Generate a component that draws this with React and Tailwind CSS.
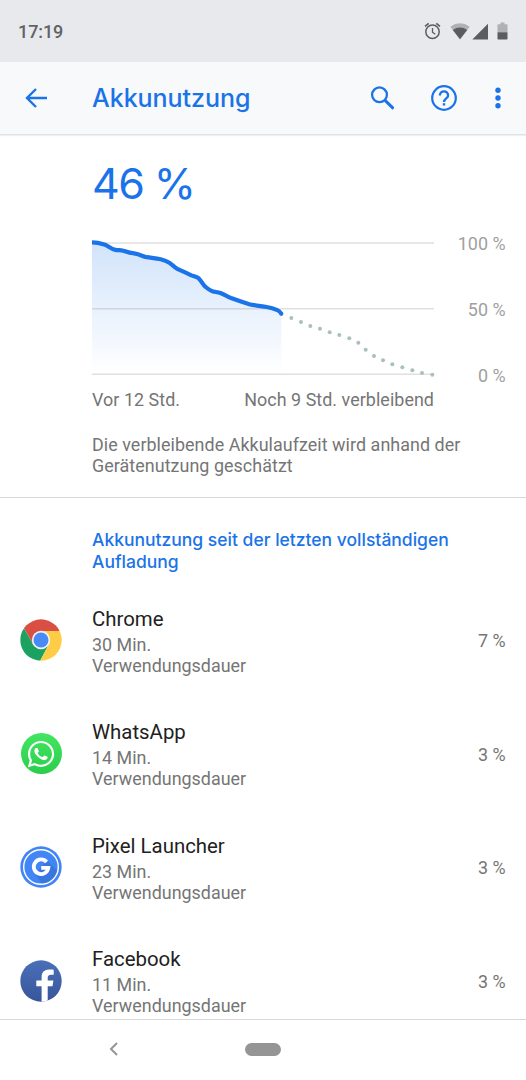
import React from "react";
import { FaWhatsapp } from "react-icons/fa";

const HISTORY =
  "M36 37 C50 37 62 40 73 43.500 C86 48 92 57 106 59.500 C114 61 121 60 130 62 C142 66 152 69 166 71 C178 73 188 79 200 81.500 C216 84 228 85 242 88 C252 90.500 260 93 268 98 C277 104 282 111 292 116.500 C305 123 320 129 334 136 C342 139 350 141 356 145 C365 153 368 164 377 171 C384 177 390 181 397 183.500 C406 186 413 186 421 189 C432 193 441 199 453 204 C472 211 490 217 508 222.500 C525 227 542 228 560 231 C572 233 582 236 592 240.500 C598 243 602 247 604 252";

const FORECAST = [
  [634, 264], [663, 276], [691, 288], [720, 296], [749, 307], [778, 315],
  [808, 325], [835, 338], [857, 359], [882, 378], [909, 391], [937, 403],
  [967, 412], [997, 421], [1026, 429], [1057, 434],
];

function ChromeIcon() {
  return (
    <svg viewBox="0 0 42 42" className="size-[42px]">
      <defs>
        <clipPath id="chromeDisc">
          <circle cx="21" cy="21" r="20.700" />
        </clipPath>
      </defs>
      <g clipPath="url(#chromeDisc)">
        <path d="M0 0H42V12.100H21L13.200 25.600 4.300 10.100Z" fill="#da4f43" />
        <path d="M4.300 10.100 13.200 25.600 28.800 25.600 20 42H0V10.100Z" fill="#1ba160" />
        <path d="M21 12.100H42V42H20L28.800 25.600Z" fill="#ffcd45" />
      </g>
      <circle cx="21" cy="21" r="9.200" fill="#f2f2f2" />
      <circle cx="21" cy="21" r="7.500" fill="#4a8af4" />
    </svg>
  );
}

function WhatsAppIcon() {
  return (
    <span className="ml-[0.5px] flex size-[41px] items-center justify-center rounded-full bg-linear-to-b from-[#42e661] to-[#2ace4b]">
      <FaWhatsapp className="size-[30px] text-white" />
    </span>
  );
}

function LauncherIcon() {
  return (
    <svg viewBox="0 0 42 42" className="size-[42px]">
      <defs>
        <clipPath id="launcherDisc">
          <circle cx="21" cy="21" r="16.400" />
        </clipPath>
      </defs>
      <circle cx="21" cy="21" r="20.700" fill="#4285f4" />
      <circle cx="21" cy="21" r="17.300" fill="#4285f4" stroke="#fff" strokeWidth="1.400" />
      <path clipPath="url(#launcherDisc)" d="M27 14.500 42 29V42H25L15 28Z" fill="#3a76e0" />
      <path d="M26.600 16A7.300 7.300 0 1 0 28.300 21.800H21.200" fill="none" stroke="#fff" strokeWidth="3.800" />
    </svg>
  );
}

function FacebookIcon() {
  return (
    <svg viewBox="0 0 42 42" className="size-[42px]">
      <defs>
        <linearGradient id="facebookFill" x1="0" y1="0" x2="0" y2="1">
          <stop offset="0" stopColor="#4a70b8" />
          <stop offset="1" stopColor="#37559a" />
        </linearGradient>
        <clipPath id="facebookDisc">
          <circle cx="21" cy="21" r="20.700" />
        </clipPath>
      </defs>
      <circle cx="21" cy="21" r="20.700" fill="url(#facebookFill)" />
      <path
        clipPath="url(#facebookDisc)"
        d="M21.600 42V26.200H16.300V20.400H21.600V17.200C21.600 12.300 24.400 9.500 29.200 9.500 31 9.500 33.700 9.700 33.700 9.700V14.800H31C28.500 14.800 27.700 16.100 27.700 18V20.400H33.400L32.500 26.200H27.700V42Z"
        fill="#fff"
      />
    </svg>
  );
}

const APPS = [
  { name: "Chrome", minutes: "30 Min.", share: "7 %", Icon: ChromeIcon },
  { name: "WhatsApp", minutes: "14 Min.", share: "3 %", Icon: WhatsAppIcon },
  { name: "Pixel Launcher", minutes: "23 Min.", share: "3 %", Icon: LauncherIcon },
  { name: "Facebook", minutes: "11 Min.", share: "3 %", Icon: FacebookIcon },
];

function StatusBar() {
  return (
    <div className="flex h-[62px] shrink-0 items-center justify-between bg-[#e8e9ed] pr-[18px] pl-[18px]">
      <span className="text-[18px] font-medium tracking-[-0.1px] text-[#626365]">17:19</span>
      <div className="flex items-center text-[#5b5c5e]">
        <svg viewBox="0 0 17 18" className="h-[18px] w-[17px]" fill="none" stroke="currentColor">
          <circle cx="8.500" cy="9.800" r="6.700" strokeWidth="1.500" />
          <path d="M8.500 6V10.200L11.300 12.200" strokeWidth="1.300" />
          <path d="M1 4.400 4.700 1.300M16 4.400 12.300 1.300" strokeWidth="1.600" />
        </svg>
        <svg viewBox="0 0 20 17" className="ml-[9px] h-[17px] w-5" fill="currentColor">
          <path d="M0.300 3.700Q10 -3 19.700 3.700L10 16.300Z" opacity="0.400" />
          <path d="M2.800 6.900Q10 2 17.200 6.900L10 16.300Z" />
        </svg>
        <svg viewBox="0 0 17 17" className="ml-[2px] h-[17px] w-[17px]" fill="currentColor">
          <path d="M16 0.800V16.500H0.300Z" />
        </svg>
        <svg viewBox="0 0 11 18" className="ml-[8px] h-[18px] w-[11px]" fill="currentColor">
          <path d="M1.300 2.300H3.500V0.500H7.500V2.300H9.700Q10.500 2.300 10.500 3.100V10.300H0.500V3.100Q0.500 2.300 1.300 2.300Z" opacity="0.400" />
          <path d="M0.500 10.300H10.500V16.700Q10.500 17.500 9.700 17.500H1.300Q0.500 17.500 0.500 16.700Z" />
        </svg>
      </div>
    </div>
  );
}

function AppBar() {
  return (
    <header className="flex h-[73px] shrink-0 items-center border-b border-[#e1e4e6] bg-[#f8f9fb] pr-[25px] pl-[25px] text-[#1a73e8] shadow-[0_1px_1px_#eef0f1]">
      <svg viewBox="0 0 24 22" className="h-[22px] w-6" fill="none" stroke="currentColor" strokeWidth="2.400">
        <path d="M22 11H2.500M11 2 2 11 11 20" />
      </svg>
      <h1 className="ml-[43px] flex-1 pt-px font-['Inter'] text-[25px] font-medium tracking-[-0.030px]">Akkunutzung</h1>
      <svg viewBox="0 0 24 24" className="size-6" fill="none" stroke="currentColor">
        <circle cx="9.500" cy="8.800" r="7.400" strokeWidth="2.300" />
        <path d="M14.800 14.100 23.500 22.700" strokeWidth="3" />
      </svg>
      <svg viewBox="0 0 26 26" className="ml-[37px] size-[26px]" fill="none" stroke="currentColor">
        <circle cx="13" cy="13" r="11.800" strokeWidth="2.200" />
        <path d="M8.900 10.600C8.900 4.900 17.100 4.900 17.100 10.400C17.100 13.300 13 13.500 13 17" strokeWidth="2.300" />
        <path d="M11.800 18.200H14.200V20.500H11.800Z" fill="currentColor" stroke="none" />
      </svg>
      <svg viewBox="0 0 6 22" className="ml-[38px] h-[22px] w-1.5" fill="currentColor">
        <circle cx="3" cy="3.300" r="2.700" />
        <circle cx="3" cy="11" r="2.700" />
        <circle cx="3" cy="18.700" r="2.700" />
      </svg>
    </header>
  );
}

function BatteryChart() {
  return (
    <div className="flex justify-between">
      <svg viewBox="36 15 1026 435" className="h-[145px] w-[342px] overflow-visible">
        <defs>
          <linearGradient id="usageFill" x1="0" y1="0" x2="0" y2="1">
            <stop offset="0" stopColor="#1a73e8" stopOpacity="0.200" />
            <stop offset="1" stopColor="#1a73e8" stopOpacity="0" />
          </linearGradient>
        </defs>
        <path d="M36 39H1062M36 236H1062M36 433H1062" stroke="#e0e0e0" strokeWidth="4.500" />
        <path d={HISTORY + "V432H36Z"} fill="url(#usageFill)" />
        <path d={HISTORY} fill="none" stroke="#1a73e8" strokeWidth="12.500" strokeLinejoin="round" />
        <circle cx="604" cy="251.500" r="6.200" fill="#1a73e8" />
        {FORECAST.map(([x, y]) => (
          <circle key={x} cx={x} cy={y} r="6" fill="#a9bfc0" />
        ))}
      </svg>
      <div className="-mt-[2px] flex h-[154px] flex-col justify-between text-right leading-[22px] text-[#a0a0a0]">
        <span>100 %</span>
        <span>50 %</span>
        <span>0 %</span>
      </div>
    </div>
  );
}

function AppRow({ name, minutes, share, Icon }) {
  return (
    <li className="flex h-[113.5px] shrink-0 items-center pr-[20.5px] pl-5">
      <span className="-mt-[1.5px] flex w-[42px] shrink-0">
        <Icon />
      </span>
      <div className="ml-[30px] flex-1 leading-[21px]">
        <p className="text-[20.400px] leading-[26px] text-[#212121]">{name}</p>
        <p className="mt-[2px] tracking-[0.020px]">
          {minutes}
          <br />
          Verwendungsdauer
        </p>
      </div>
      <span className="pt-px">{share}</span>
    </li>
  );
}

export default function App() {
  return (
    <div className="flex h-[1080px] w-[526px] flex-col overflow-hidden bg-white font-['Roboto',sans-serif] text-[17.9px] text-[#757575]">
      <StatusBar />
      <AppBar />
      <main className="flex h-[884px] shrink-0 flex-col overflow-hidden pt-px">
        <section className="h-[362px] shrink-0 border-b border-[#d8d8d8] pr-[20.5px] pl-[92px]">
          <p className="flex h-[99px] items-center pb-[5px] font-['Inter'] text-[43px] font-normal tracking-[-1.600px] text-[#1a73e8]">46 %</p>
          <BatteryChart />
          <div className="mt-[2px] flex w-[342px] justify-between leading-[22px] tracking-[0.050px]">
            <span>Vor 12 Std.</span>
            <span>Noch 9 Std. verbleibend</span>
          </div>
          <p className="mt-[22.5px] leading-[21px] tracking-[0.055px]">
            Die verbleibende Akkulaufzeit wird anhand der
            <br />
            Gerätenutzung geschätzt
          </p>
        </section>
        <h2 className="mt-[31px] shrink-0 pl-[92px] font-['Inter'] text-[17.5px] leading-[22.4px] font-medium text-[#1a73e8]">
          Akkunutzung seit der letzten vollständigen
          <br />
          Aufladung
        </h2>
        <ul className="mt-[10.4px] flex flex-col">
          {APPS.map((app) => (
            <AppRow key={app.name} {...app} />
          ))}
        </ul>
      </main>
      <nav className="flex h-[61px] shrink-0 items-center border-t border-[#d8d8d8] pl-[109px] pb-[2px] text-[#959595]">
        <svg viewBox="0 0 9 14" className="h-3.5 w-[9px]" fill="none" stroke="currentColor" strokeWidth="2">
          <path d="M8 1 2 7 8 13" />
        </svg>
        <span className="ml-[127px] h-[13px] w-9 rounded-full bg-[#959595]" />
      </nav>
    </div>
  );
}
